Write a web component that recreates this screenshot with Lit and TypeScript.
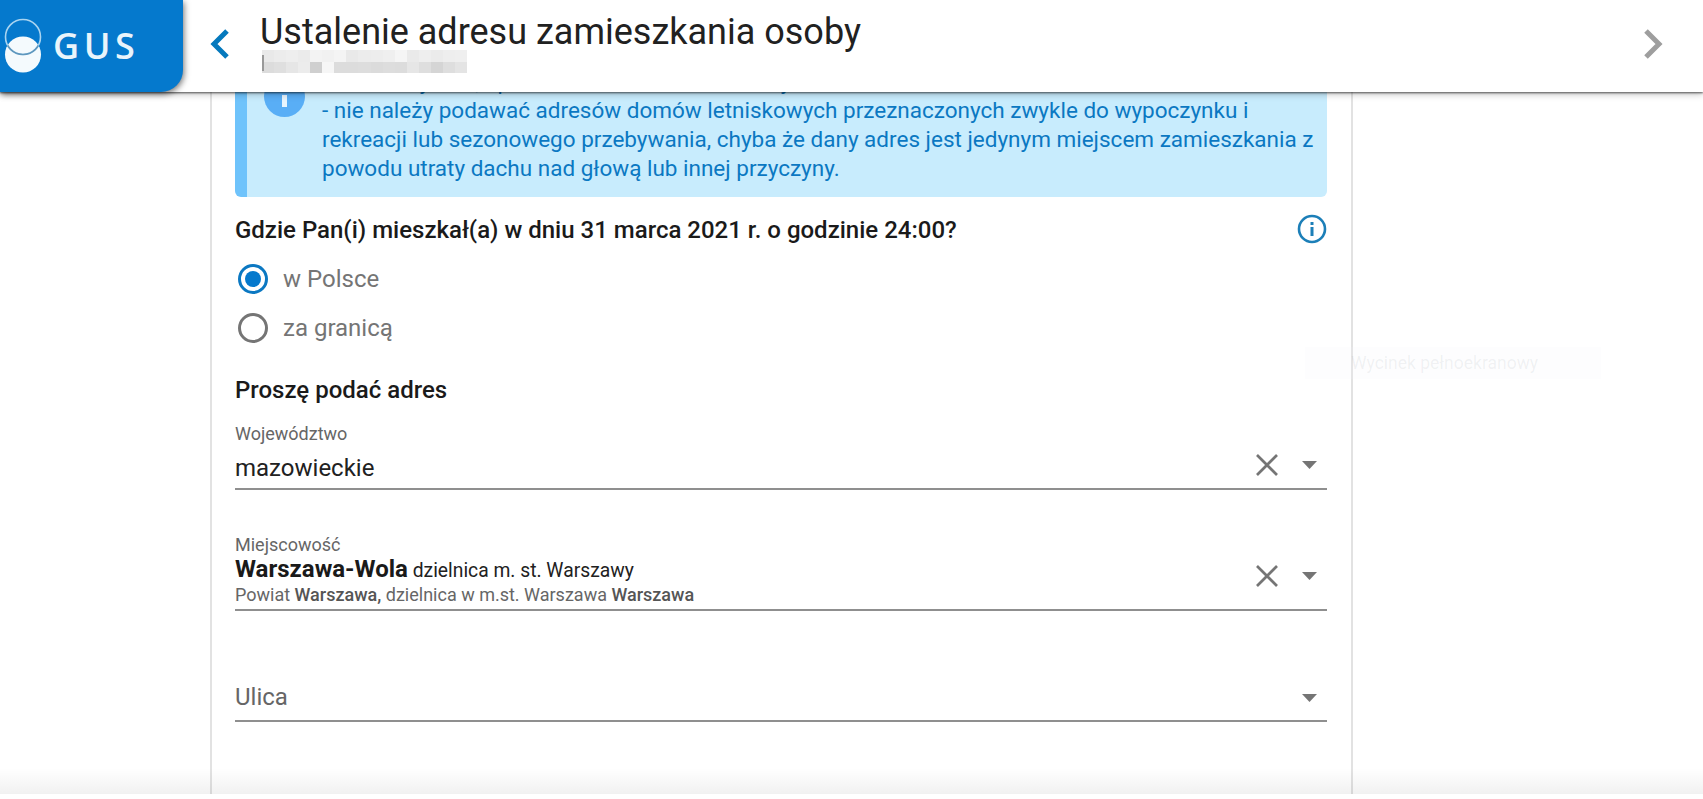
import { LitElement, html, css, svg } from "lit";
import { customElement } from "lit/decorators.js";

const clearIcon = svg`<svg class="x" viewBox="0 0 24 24" width="24" height="24"><path d="M2 2 L22 22 M22 2 L2 22" stroke="#757575" stroke-width="2.7" fill="none"/></svg>`;
const arrowIcon = svg`<svg class="arrow" viewBox="0 0 15 8" width="15" height="8"><path d="M0 0 H15 L7.5 8 Z" fill="#757575"/></svg>`;

const mosaic = [
  "#e9e9e9","#ececec","#eeeeee","#ebebeb","#f3f3f3","#f1f1f1","#f4f4f4","#e9e9e9","#ececec","#ededed","#efefef","#f5f5f5","#eaeaea","#eeeeee","#ebebeb","#eeeeee","#efefef",
  "#dcdcdc","#dfdfdf","#e6e6e6","#ececec","#cfcfcf","#f6f6f6","#dcdcdc","#dcdcdc","#dddddd","#dbdbdb","#dddddd","#dcdcdc","#e6e6e6","#dedede","#d5d5d5","#dedede","#e4e4e4",
];

@customElement("app-root")
export class AppRoot extends LitElement {
  static styles = css`
    :host {
      display: block;
      position: relative;
      width: 1703px;
      height: 799px;
      overflow: hidden;
      background: #fff;
      font-family: Roboto, "Noto Sans", sans-serif;
      color: #1a1a1a;
    }
    .page { display: flex; flex-direction: column; height: 794px; position: relative; }
    .header {
      flex: none;
      height: 92px;
      display: flex;
      align-items: stretch;
      background: #fff;
      box-shadow: 0 1px 2px rgba(0,0,0,.6), 0 2px 7px rgba(0,0,0,.25);
      position: relative;
      z-index: 3;
    }
    .logo {
      flex: none;
      width: 183px;
      display: flex;
      align-items: center;
      gap: 11px;
      background: #0579cd;
      border-bottom-right-radius: 22px;
      box-shadow: 1px 2px 6px rgba(0,0,0,.55);
      box-sizing: border-box;
      padding: 0 0 0 4px;
      color: #e9f4fb;
    }
    .logo svg { flex: none; }
    .logo span { font-family: "Open Sans", sans-serif; font-size: 36px; font-weight: 600; letter-spacing: 4.6px; line-height: 1; }
    .back { flex: none; margin: 0 0 5px 27px; width: 20px; align-self: center; display: flex; }
    .titles { flex: 1; padding-left: 30px; min-width: 0; }
    .title { font-size: 36px; line-height: 40px; margin-top: 12px; color: #212121; font-weight: 400; }
    .blur {
      width: 205px; height: 23px; margin-top: -2px; margin-left: 2px;
      display: grid; grid-template-columns: repeat(17, 1fr); grid-template-rows: 1fr 1fr;
      position: relative;
    }
    .blur::before { content: ""; position: absolute; left: 0; top: 5px; width: 2px; height: 16px; background: #999; }
    .next { flex: none; width: 20px; margin: 0 40px 5px 0; align-self: center; display: flex; }
    .main { flex: 1; min-height: 0; overflow: hidden; position: relative; }
    .fade {
      position: absolute; left: 0; right: 0; bottom: 0; height: 26px;
      background: linear-gradient(rgba(0,0,0,0), rgba(0,0,0,.055));
      pointer-events: none; z-index: 1;
    }
    .card {
      display: flow-root;
      width: 1143px; margin-left: 210px; height: 100%;
      box-sizing: border-box;
      border-left: 2px solid #e2e2e2; border-right: 2px solid #e2e2e2;
      padding: 0 24px 0 23px;
    }
    .info {
      display: flex;
      margin-top: -29px;
      height: 134px;
      box-sizing: border-box;
      background: #c8ecfd;
      border-left: 12px solid #6fc3fb;
      border-radius: 6px;
      padding-left: 17px;
      color: #0b78c2;
      font-size: 22.5px;
      line-height: 29px;
    }
    .badge {
      flex: none; width: 41px; height: 41px; border-radius: 50%;
      background: #59aef6;
      display: flex; align-items: flex-end; justify-content: center;
      margin-top: 13px; box-sizing: border-box; padding-bottom: 10px;
    }
    .badge i { display: block; width: 5px; height: 12px; background: #e8f5fe; }
    .info p { margin: 4px 0 0 17px; white-space: nowrap; }
    .question { display: flex; justify-content: space-between; align-items: center; margin-top: 16px; height: 32px; }
    .question h2, h3 { margin: 0; font-size: 24px; font-weight: 500; line-height: 32px; color: #1a1a1a; }
    .question h2 { padding-top: 2px; }
    .radios { margin-top: 18px; padding-left: 3px; display: flex; flex-direction: column; gap: 18px; }
    .radio { display: flex; align-items: center; gap: 15px; height: 31px; font-size: 24px; color: #757575; }
    .ring { flex: none; width: 30px; height: 30px; border-radius: 50%; border: 3px solid #757575; box-sizing: border-box; display: flex; align-items: center; justify-content: center; }
    .ring.on { border-color: #0b78c2; }
    .ring.on i { display: block; width: 16px; height: 16px; border-radius: 50%; background: #0579cd; }
    h3 { margin-top: 31px; }
    .field { position: relative; border-bottom: 2px solid #8f8f8f; box-sizing: border-box; }
    .f1 { height: 66px; margin-top: 18px; }
    .f2 { height: 77px; margin-top: 44px; padding-top: 1px; }
    .f3 { height: 56px; margin-top: 55px; padding-top: 16px; }
    .label { font-size: 18px; line-height: 20px; color: #666; }
    .value { font-size: 24px; line-height: 30px; color: #212121; margin-top: 9px; }
    .name { line-height: 28px; color: #212121; font-size: 19.3px; }
    .name b { font-size: 24px; font-weight: 700; color: #1a1a1a; }
    .sub { font-size: 18px; line-height: 20px; color: #666; }
    .sub b { font-weight: 500; color: #555; }
    .placeholder { font-size: 24px; color: #666; line-height: 30px; }
    .tools { position: absolute; right: 10px; height: 24px; display: flex; align-items: center; gap: 23px; }
    .f1 .tools { top: 29px; }
    .f2 .tools { top: 30px; }
    .f3 .tools { top: 20px; }
    .clip {
      position: absolute; left: 1305px; top: 347px; width: 296px; height: 32px;
      background: rgba(240,245,250,.16); z-index: 2;
      color: rgba(120,130,140,.1); font-size: 17.5px; line-height: 32px; text-indent: 46px;
    }
  `;

  private field(cls: string, body: unknown, clear = true) {
    return html`<div class="field ${cls}">
      ${body}
      <div class="tools">${clear ? clearIcon : ""}${arrowIcon}</div>
    </div>`;
  }

  render() {
    return html`
      <div class="page">
        <header class="header">
          <div class="logo">
            <svg width="38" height="56" viewBox="0 0 38 56">
              <defs><clipPath id="lens"><circle cx="19" cy="36.5" r="18"/></clipPath></defs>
              <circle cx="19" cy="36.5" r="18" fill="#f4fafd"/>
              <circle cx="19" cy="19" r="17.5" fill="none" stroke="#a9d4f0" stroke-width="1.6"/>
              <circle cx="19" cy="19" r="17.5" fill="none" stroke="#5f97bd" stroke-width="1.6" clip-path="url(#lens)"/>
            </svg>
            <span>GUS</span>
          </div>
          <div class="back">
            <svg width="20" height="30" viewBox="0 0 20 30"><path d="M17 2 L4 15 L17 28" fill="none" stroke="#0579bd" stroke-width="5"/></svg>
          </div>
          <div class="titles">
            <div class="title">Ustalenie adresu zamieszkania osoby</div>
            <div class="blur">${mosaic.map((c) => html`<span style="background:${c}"></span>`)}</div>
          </div>
          <div class="next">
            <svg width="20" height="30" viewBox="0 0 20 30"><path d="M3 2 L16 15 L3 28" fill="none" stroke="#9e9e9e" stroke-width="5"/></svg>
          </div>
        </header>
        <main class="main">
          <div class="card">
            <div class="info">
              <div class="badge"><i></i></div>
              <p>- dla osoby tam, np. studenta uczelni lub szkoły<br>- nie należy podawać adresów domów letniskowych przeznaczonych zwykle do wypoczynku i<br>rekreacji lub sezonowego przebywania, chyba że dany adres jest jedynym miejscem zamieszkania z<br>powodu utraty dachu nad głową lub innej przyczyny.</p>
            </div>
            <div class="question">
              <h2>Gdzie Pan(i) mieszkał(a) w dniu 31 marca 2021 r. o godzinie 24:00?</h2>
              <svg width="30" height="30" viewBox="0 0 30 30">
                <circle cx="15" cy="15" r="13" fill="none" stroke="#1c7fb8" stroke-width="2.6"/>
                <rect x="13.5" y="13" width="3" height="9" fill="#1c7fb8"/>
                <rect x="13.5" y="8" width="3" height="3" fill="#1c7fb8"/>
              </svg>
            </div>
            <div class="radios">
              <div class="radio"><span class="ring on"><i></i></span>w Polsce</div>
              <div class="radio"><span class="ring"></span>za granicą</div>
            </div>
            <h3>Proszę podać adres</h3>
            ${this.field("f1", html`<div class="label">Województwo</div><div class="value">mazowieckie</div>`)}
            ${this.field("f2", html`<div class="label">Miejscowość</div><div class="name"><b>Warszawa-Wola</b> dzielnica m. st. Warszawy</div><div class="sub">Powiat <b>Warszawa,</b> dzielnica w m.st. Warszawa <b>Warszawa</b></div>`)}
            ${this.field("f3", html`<div class="placeholder">Ulica</div>`, false)}
          </div>
          <div class="fade"></div>
        </main>
      </div>
      <div class="clip">Wycinek pełnoekranowy</div>
    `;
  }
}
